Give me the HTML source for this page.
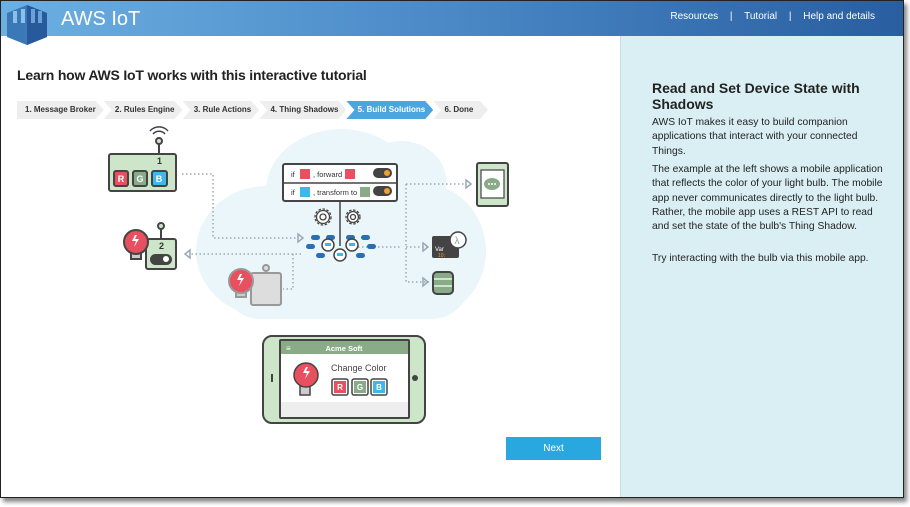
<!DOCTYPE html>
<html><head><meta charset="utf-8"><style>
*{margin:0;padding:0;box-sizing:border-box}
body{width:910px;height:507px;background:#fff;font-family:"Liberation Sans",sans-serif;position:relative;overflow:hidden}
#frame{position:absolute;left:0;top:0;width:904px;height:498px;border:1px solid #222;overflow:hidden;background:#fff;box-shadow:3px 4px 4px #888}
#hdr{position:absolute;left:0;top:0;width:902px;height:35px;background:linear-gradient(90deg,#6cb0e2,#4a88c6 50%,#295ea0)}
#hdr .t{position:absolute;left:60px;top:7px;color:#fff;font-size:20px}
#nav{position:absolute;right:28px;top:10px;color:#fff;font-size:10px}
#nav span{margin:0 9px}
#side{position:absolute;left:619px;top:35px;width:284px;height:463px;background:#daeff4;border-left:1px solid #c5dde3}
#side h2{position:absolute;left:31px;top:44px;width:240px;font-size:14px;line-height:16px;color:#222}
#side p{position:absolute;left:31px;width:236px;font-size:10.3px;line-height:14.3px;color:#222}
h1{position:absolute;left:16px;top:66px;font-size:14px;color:#222;letter-spacing:-0.2px}
#bc{position:absolute;left:16px;top:100px;height:18px;display:flex}
#bc div{height:18px;line-height:18px;font-size:8px;font-weight:bold;color:#333;background:#eee;padding:0 8px 0 9px;position:relative;clip-path:polygon(0 0,calc(100% - 8px) 0,100% 50%,calc(100% - 8px) 100%,0 100%,8px 50%)}
#bc div.a{background:#4aa6e0;color:#fff}
#next{position:absolute;left:505px;top:436px;width:95px;height:23px;background:#29a8e0;color:#fff;font-size:10px;text-align:center;line-height:23px}
</style></head><body>
<div id="frame">
<div id="hdr"><div class="t">AWS IoT</div>
<div id="nav">Resources <span>|</span> Tutorial <span>|</span> Help and details</div></div>
<svg style="position:absolute;left:4px;top:2px" width="44" height="44" viewBox="0 0 44 44">
<polygon points="22,2 42,10 42,34 22,42 2,34 2,10" fill="#3a78b8"/>
<polygon points="22,2 42,10 42,34 22,42" fill="#28599a"/>
<rect x="8" y="8" width="4" height="12" fill="#8cc0ea"/><rect x="16" y="6" width="4" height="14" fill="#8cc0ea"/><rect x="26" y="6" width="4" height="14" fill="#6aa2d6"/><rect x="33" y="8" width="4" height="12" fill="#6aa2d6"/>
</svg>
<h1>Learn how AWS IoT works with this interactive tutorial</h1>
<div id="bc"><div style="padding-left:8px;clip-path:polygon(0 0,calc(100% - 8px) 0,100% 50%,calc(100% - 8px) 100%,0 100%)">1. Message Broker</div><div>&nbsp;2. Rules Engine</div><div>&nbsp;3. Rule Actions</div><div>&nbsp;4. Thing Shadows</div><div class="a">&nbsp;5. Build Solutions</div><div>&nbsp;6. Done&nbsp;&nbsp;&nbsp;</div></div>

<svg style="position:absolute;left:0;top:0" width="620" height="498" font-family="Liberation Sans, sans-serif">
<g fill="#eaf6fa"><ellipse cx="340" cy="190" rx="75" ry="62"/><ellipse cx="265" cy="250" rx="70" ry="65"/><ellipse cx="420" cy="250" rx="65" ry="68"/><rect x="220" y="220" width="250" height="98" rx="40"/><ellipse cx="400" cy="180" rx="45" ry="40"/></g>
<g stroke="#9aa8b4" stroke-width="1.5" stroke-dasharray="1.5 2.5" fill="none">
<path d="M181 173H212V237H296"/><path d="M405 183H465M405 183V281H428M405 246H428"/><path d="M300 253H188"/><path d="M292 253V288H282"/><path d="M345 246H400"/></g>
<g fill="none" stroke="#9aa8b4" stroke-width="1.5"><path d="M297 233l5 4-5 4z"/><path d="M465 179l5 4-5 4z"/><path d="M422 242l5 4-5 4z"/><path d="M422 277l5 4-5 4z"/><path d="M189 249l-5 4 5 4z"/></g>
<g stroke="#444" stroke-width="2"><line x1="158" y1="140" x2="158" y2="153"/><circle cx="158" cy="140" r="3" fill="#cde6c9"/>
<path d="M152 133a8 8 0 0 1 12 0M149 130a12 12 0 0 1 18 0" fill="none" stroke-width="1.5"/>
<rect x="108" y="153" width="67" height="37" rx="2" fill="#cde6c9"/>
<rect x="113" y="170" width="14" height="15" rx="2" fill="#e8505f"/><rect x="132" y="170" width="14" height="15" rx="2" fill="#8aab87"/><rect x="151" y="170" width="15" height="15" rx="2" fill="#3db8e8"/></g>
<g fill="#fff" font-size="9" font-weight="bold" text-anchor="middle"><text x="120" y="181">R</text><text x="139" y="181">G</text><text x="158" y="181">B</text></g>
<text x="156" y="163" font-size="9" font-weight="bold" fill="#333">1</text>
<rect x="282" y="163" width="114" height="37" rx="2" fill="#fff" stroke="#444" stroke-width="2"/><line x1="282" y1="182" x2="396" y2="182" stroke="#444" stroke-width="1.5"/>
<line x1="339" y1="200" x2="339" y2="245" stroke="#444" stroke-width="1.5"/>
<g font-size="7.5" fill="#333"><text x="290" y="176">if</text><text x="312" y="176">, forward</text><text x="290" y="194">if</text><text x="312" y="194">, transform to</text></g>
<rect x="299" y="168" width="10" height="10" fill="#e8505f"/><rect x="344" y="168" width="10" height="10" fill="#e8505f"/><rect x="299" y="186" width="10" height="10" fill="#3db8e8"/><rect x="359" y="186" width="10" height="10" fill="#8aab87"/>
<rect x="372" y="167" width="19" height="10" rx="5" fill="#444"/><circle cx="386" cy="172" r="3" fill="#f0a030"/><rect x="372" y="185" width="19" height="10" rx="5" fill="#444"/><circle cx="386" cy="190" r="3" fill="#f0a030"/>
<g fill="#fff" stroke="#444" stroke-width="1.3"><circle cx="322" cy="216" r="8" stroke-dasharray="2.5 1.6"/><circle cx="322" cy="216" r="6.5"/><circle cx="322" cy="216" r="3"/><circle cx="352" cy="216" r="7" stroke-dasharray="2.5 1.6"/><circle cx="352" cy="216" r="5.5"/><circle cx="352" cy="216" r="2.5"/></g>
<g fill="#2a70b0"><rect x="310" y="234" width="9" height="5" rx="2.5"/><rect x="325" y="234" width="9" height="5" rx="2.5"/><rect x="345" y="234" width="9" height="5" rx="2.5"/><rect x="360" y="234" width="9" height="5" rx="2.5"/><rect x="305" y="243" width="9" height="5" rx="2.5"/><rect x="366" y="243" width="9" height="5" rx="2.5"/><rect x="315" y="252" width="9" height="5" rx="2.5"/><rect x="355" y="252" width="9" height="5" rx="2.5"/><rect x="335" y="252" width="9" height="5" rx="2.5"/></g>
<g fill="#fff" stroke="#444" stroke-width="1.5"><circle cx="327" cy="244" r="6"/><circle cx="351" cy="244" r="6"/><circle cx="339" cy="254" r="6"/></g>
<g fill="#3db8e8"><rect x="324" y="242" width="6" height="3"/><rect x="348" y="242" width="6" height="3"/><rect x="336" y="252" width="6" height="3"/></g>
<g stroke="#444" stroke-width="2"><line x1="160" y1="225" x2="160" y2="238"/><circle cx="160" cy="225" r="3" fill="#cde6c9"/>
<rect x="145" y="238" width="30" height="30" rx="2" fill="#cde6c9"/><rect x="150" y="254" width="20" height="9" rx="4.5" fill="#444"/><circle cx="165" cy="258" r="3" fill="#fff" stroke="none"/>
<path d="M130 250h10v8h-10z" fill="#ccc"/><circle cx="135" cy="241" r="12" fill="#e8505f"/></g>
<path d="M134 234l-3 6h4l-2 6 5-8h-4l2-4z" fill="#fff"/>
<text x="158" y="248" font-size="9" font-weight="bold" fill="#333">2</text>
<g stroke="#999" stroke-width="2"><line x1="265" y1="268" x2="265" y2="263"/><circle cx="265" cy="267" r="3" fill="#ddd"/>
<rect x="250" y="272" width="30" height="32" rx="2" fill="#ddd"/><path d="M235 288h10v8h-10z" fill="#ccc"/><circle cx="240" cy="280" r="12" fill="#e8505f"/></g>
<path d="M239 273l-3 6h4l-2 6 5-8h-4l2-4z" fill="#fff"/>
<rect x="476" y="162" width="31" height="43" rx="2" fill="#cde6c9" stroke="#444" stroke-width="2"/><rect x="480" y="169" width="23" height="28" fill="#fff" stroke="#444" stroke-width="1.2"/>
<ellipse cx="491" cy="183" rx="8" ry="6" fill="#8aab87"/><g fill="#fff"><circle cx="488" cy="183" r="1"/><circle cx="491" cy="183" r="1"/><circle cx="494" cy="183" r="1"/></g>
<rect x="431" y="235" width="27" height="22" rx="2" fill="#444"/><text x="434" y="250" font-size="6" fill="#fff">Var</text><text x="437" y="256" font-size="5" fill="#f0a030">10;</text>
<circle cx="457" cy="239" r="8" fill="#fff" stroke="#444" stroke-width="1.5"/><text x="453.5" y="243" font-size="10" fill="#8aab87">λ</text>
<rect x="432" y="271" width="20" height="22" rx="4" fill="#8aab87" stroke="#444" stroke-width="2"/><g stroke="#cde6c9" stroke-width="2"><line x1="433" y1="278" x2="451" y2="278"/><line x1="433" y1="285" x2="451" y2="285"/></g>
<rect x="262" y="335" width="162" height="87" rx="9" fill="#cde6c9" stroke="#444" stroke-width="2"/>
<rect x="279" y="339" width="129" height="78" rx="1" fill="#fff" stroke="#444" stroke-width="2"/>
<rect x="280" y="340" width="127" height="13" fill="#8aab87"/><rect x="280" y="401" width="127" height="15" fill="#eee"/>
<text x="343" y="350" font-size="7.5" font-weight="bold" fill="#fff" text-anchor="middle">Acme Soft</text><text x="285" y="350" font-size="8" fill="#fff">≡</text>
<rect x="270" y="373" width="2" height="8" fill="#444"/><circle cx="414" cy="377" r="3" fill="#444"/>
<path d="M299 385h10v9h-10z" fill="#ccc" stroke="#444" stroke-width="1.5"/><circle cx="305" cy="374" r="12" fill="#e8505f" stroke="#444" stroke-width="1.5"/><path d="M305 366l-3 6h4l-2 6 5-8h-4l2-4z" fill="#fff"/>
<text x="330" y="370" font-size="9" fill="#444">Change Color</text>
<g stroke="#444" stroke-width="1.5"><rect x="331" y="378" width="16" height="16" rx="2" fill="#fff"/><rect x="351" y="378" width="16" height="16" rx="2" fill="#fff"/><rect x="370" y="378" width="16" height="16" rx="2" fill="#fff"/></g>
<rect x="333" y="380" width="12" height="12" fill="#e8505f"/><rect x="353" y="380" width="12" height="12" fill="#8aab87"/><rect x="372" y="380" width="12" height="12" fill="#3db8e8"/>
<g fill="#fff" font-size="8" font-weight="bold" text-anchor="middle"><text x="339" y="389">R</text><text x="359" y="389">G</text><text x="378" y="389">B</text></g>
</svg>
<div id="next">Next</div>
<div id="side">
<h2>Read and Set Device State with Shadows</h2>
<p style="top:80px">AWS IoT makes it easy to build companion applications that interact with your connected Things.</p>
<p style="top:127px">The example at the left shows a mobile application that reflects the color of your light bulb. The mobile app never communicates directly to the light bulb. Rather, the mobile app uses a REST API to read and set the state of the bulb's Thing Shadow.</p>
<p style="top:216px">Try interacting with the bulb via this mobile app.</p>
</div>
</div>
</body></html>
